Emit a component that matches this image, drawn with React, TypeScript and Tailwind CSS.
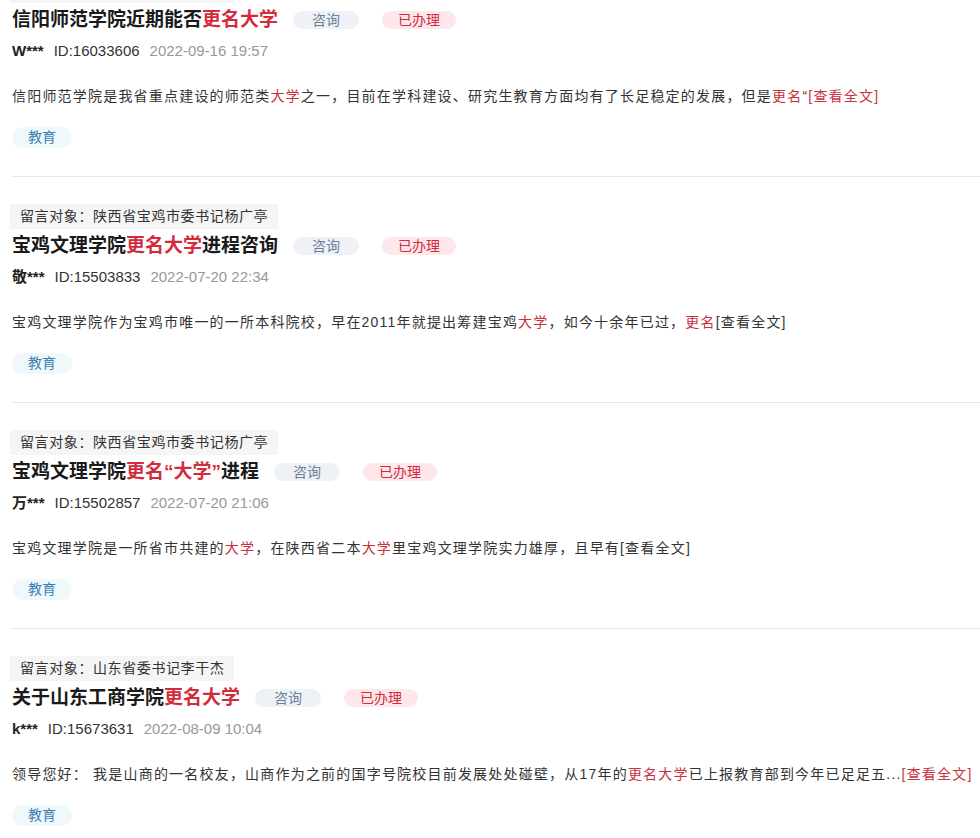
import React from 'react';

type Seg = string | { r: string };

interface Item {
  target: string;
  title: Seg[];
  user: string;
  id: string;
  time: string;
  body: Seg[];
}

const items: Item[] = [
  {
    target: '留言对象：河南省信阳市委书记',
    title: ['信阳师范学院近期能否', { r: '更名大学' }],
    user: 'W***',
    id: 'ID:16033606',
    time: '2022-09-16 19:57',
    body: ['信阳师范学院是我省重点建设的师范类', { r: '大学' }, '之一，目前在学科建设、研究生教育方面均有了长足稳定的发展，但是', { r: '更名' }, '“', { r: '[查看全文]' }],
  },
  {
    target: '留言对象：陕西省宝鸡市委书记杨广亭',
    title: ['宝鸡文理学院', { r: '更名大学' }, '进程咨询'],
    user: '敬***',
    id: 'ID:15503833',
    time: '2022-07-20 22:34',
    body: ['宝鸡文理学院作为宝鸡市唯一的一所本科院校，早在2011年就提出筹建宝鸡', { r: '大学' }, '，如今十余年已过，', { r: '更名' }, '[查看全文]'],
  },
  {
    target: '留言对象：陕西省宝鸡市委书记杨广亭',
    title: ['宝鸡文理学院', { r: '更名“大学”' }, '进程'],
    user: '万***',
    id: 'ID:15502857',
    time: '2022-07-20 21:06',
    body: ['宝鸡文理学院是一所省市共建的', { r: '大学' }, '，在陕西省二本', { r: '大学' }, '里宝鸡文理学院实力雄厚，且早有[查看全文]'],
  },
  {
    target: '留言对象：山东省委书记李干杰',
    title: ['关于山东工商学院', { r: '更名大学' }],
    user: 'k***',
    id: 'ID:15673631',
    time: '2022-08-09 10:04',
    body: ['领导您好：  我是山商的一名校友，山商作为之前的国字号院校目前发展处处碰壁，从17年的', { r: '更名大学' }, '已上报教育部到今年已足足五...', { r: '[查看全文]' }],
  },
];

function render(segs: Seg[], red: string) {
  return segs.map((s, i) =>
    typeof s === 'string' ? <span key={i}>{s}</span> : <span key={i} className={red}>{s.r}</span>
  );
}

export default function App() {
  return (
    <div
      className="w-[980px] h-[838px] overflow-hidden bg-white"
      style={{ fontFamily: '"Liberation Sans", "Noto Sans CJK SC", sans-serif' }}
    >
      <div className="-mt-[49px] pl-3">
        {items.map((it, i) => (
          <div key={i} className={`pt-[27px] pb-[28px] ${i < items.length - 1 ? 'border-b border-[#e8e8e8]' : ''}`}>
            <div className="inline-block bg-[#f5f5f5] text-[14px] tracking-[0.6px] text-[#333] px-[10px] h-[25px] leading-[25px] -ml-[2px]">{it.target}</div>
            <div className="flex items-center h-[34px]">
              <h2 className="text-[19px] font-bold text-[#1a1a1a] leading-[34px]">{render(it.title, 'text-[#d42b3c]')}</h2>
              <span className="ml-[15px] w-[66px] h-[18px] rounded-full bg-[#eef2f7] text-[#6b7f99] text-[14px] leading-[18px] text-center">咨询</span>
              <span className="ml-[23px] w-[74px] h-[18px] rounded-full bg-[#fde7eb] text-[#d42b3c] text-[14px] leading-[18px] text-center">已办理</span>
            </div>
            <div className="flex items-center gap-[10px] text-[15px] leading-[28px]">
              <span className="font-bold text-[#222]">{it.user}</span>
              <span className="text-[#333]">{it.id}</span>
              <span className="text-[#999]">{it.time}</span>
            </div>
            <p className="mt-[16px] text-[14px] tracking-[1.2px] text-[#333] leading-[30px]">{render(it.body, 'text-[#c8323e]')}</p>
            <div className="mt-[16px] w-[60px] h-[21px] leading-[21px] rounded-full bg-[#eff9fc] text-[#3b7fb3] text-[14px] text-center">教育</div>
          </div>
        ))}
      </div>
    </div>
  );
}
